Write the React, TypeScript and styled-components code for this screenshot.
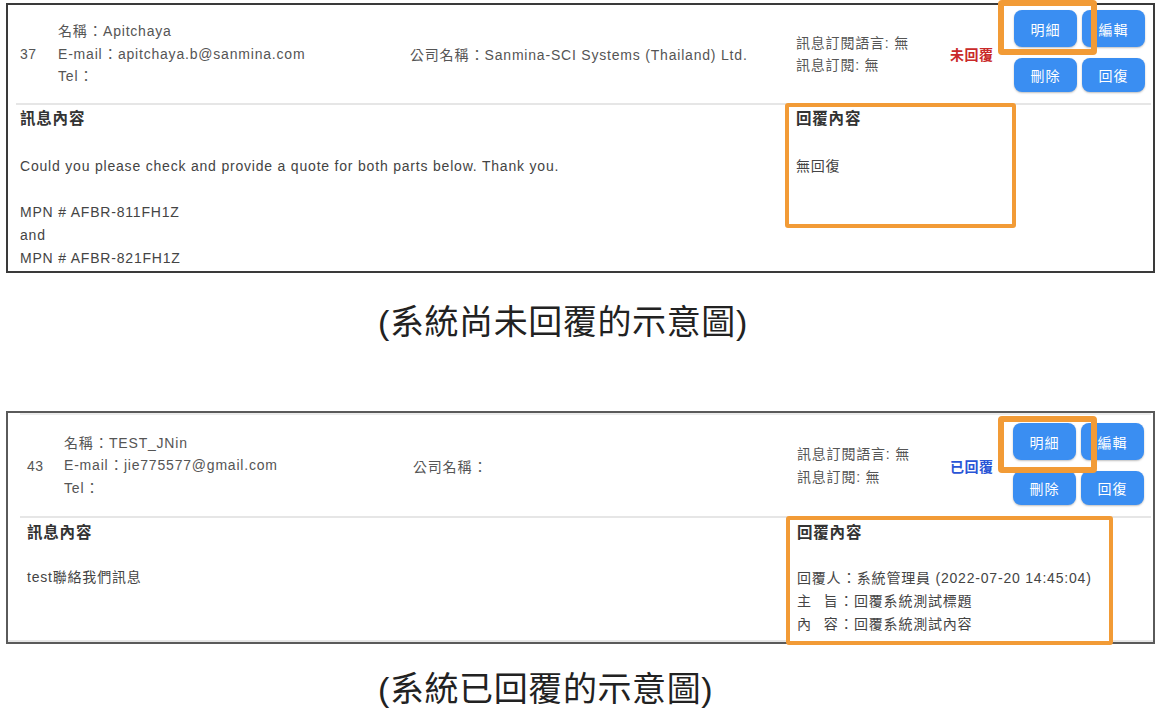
import * as React from "react"
import styled, { createGlobalStyle } from "styled-components"

const FONT = `"Liberation Sans", "Noto Sans CJK TC", sans-serif`

const GlobalStyle = createGlobalStyle`
  body {
    margin: 0;
    background: #fff;
    font-family: ${FONT};
  }
`

interface IMessage {
  id: number
  name: string
  email: string
  company: string
  replied: boolean
  body: string
  reply?: { by: string; subject: string; content: string }
}

interface ILayout {
  border: string
  headerCols: string
  lineInset: number
  headerPad: number
  headerHeight: number
  topLine: boolean
  actionsTop: number
  leftWidth: number
  leftPad: number
  replyWidth: number
  replyHeight: number
  headingTop: number
  headingGap: number
  markLeft: number
  markTop: number
  markHeight: number
}

const messages: IMessage[] = [
  {
    id: 37,
    name: "Apitchaya",
    email: "apitchaya.b@sanmina.com",
    company: "Sanmina-SCI Systems (Thailand) Ltd.",
    replied: false,
    body:
      "Could you please check and provide a quote for both parts below. Thank you.\n\nMPN # AFBR-811FH1Z\nand\nMPN # AFBR-821FH1Z",
  },
  {
    id: 43,
    name: "TEST_JNin",
    email: "jie775577@gmail.com",
    company: "",
    replied: true,
    body: "test聯絡我們訊息",
    reply: {
      by: "系統管理員 (2022-07-20 14:45:04)",
      subject: "回覆系統測試標題",
      content: "回覆系統測試內容",
    },
  },
]

const layouts: ILayout[] = [
  {
    border: "#3a3a3a",
    headerCols: "38px 352px 386px 154px 64px auto",
    lineInset: 8,
    headerPad: 4,
    headerHeight: 98,
    topLine: false,
    actionsTop: 5,
    leftWidth: 777,
    leftPad: 12,
    replyWidth: 231,
    replyHeight: 125,
    headingTop: 2,
    headingGap: 24,
    markLeft: -16,
    markTop: -10,
    markHeight: 55,
  },
  {
    border: "#5a5a5a",
    headerCols: "37px 349px 384px 153px 63px auto",
    lineInset: 12,
    headerPad: 7,
    headerHeight: 101,
    topLine: true,
    actionsTop: 8,
    leftWidth: 778,
    leftPad: 19,
    replyWidth: 327,
    replyHeight: 129,
    headingTop: 3,
    headingGap: 22,
    markLeft: -15,
    markTop: -7,
    markHeight: 57,
  },
]

const captions = ["(系統尚未回覆的示意圖)", "(系統已回覆的示意圖)"]

export default function App() {
  return (
    <Page lang="zh-TW">
      <GlobalStyle />
      {messages.map((m, i) => (
        <React.Fragment key={m.id}>
          <MessageCard message={m} layout={layouts[i]} />
          <Caption $first={i === 0}>{captions[i]}</Caption>
        </React.Fragment>
      ))}
    </Page>
  )
}

// full-width colon, centred in its em box like the traditional-chinese glyph
const C = () => <Colon>：</Colon>

function MessageCard({ message, layout }: { message: IMessage; layout: ILayout }) {
  return (
    <Frame $border={layout.border}>
      <Header
        $cols={layout.headerCols}
        $inset={layout.lineInset}
        $pad={layout.headerPad}
        $h={layout.headerHeight}
        $topLine={layout.topLine}
      >
        <Index>{message.id}</Index>
        <Contact>
          <div>
            名稱<C />
            {message.name}
          </div>
          <div>
            E-mail<C />
            {message.email}
          </div>
          <div>
            Tel<C />
          </div>
        </Contact>
        <div>
          公司名稱<C />
          {message.company}
        </div>
        <Contact>
          <div>訊息訂閱語言: 無</div>
          <div>訊息訂閱: 無</div>
        </Contact>
        <Status $replied={message.replied}>{message.replied ? "已回覆" : "未回覆"}</Status>
        <Actions $top={layout.actionsTop}>
          <Mark $left={layout.markLeft} $top={layout.markTop} $h={layout.markHeight} />
          <ActionButton $h={37}>明細</ActionButton>
          <ActionButton $h={37}>編輯</ActionButton>
          <ActionButton $h={34}>刪除</ActionButton>
          <ActionButton $h={34}>回復</ActionButton>
        </Actions>
      </Header>
      <Body $left={layout.leftWidth} $reply={layout.replyWidth} $bottomLine={layout.topLine}>
        <MessageCol $pad={layout.leftPad}>
          <Heading $top={layout.headingTop}>訊息內容</Heading>
          <Text $gap={layout.topLine ? 21 : layout.headingGap}>{message.body}</Text>
        </MessageCol>
        <ReplyBox $h={layout.replyHeight}>
          <Heading $top={layout.headingTop - 2}>回覆內容</Heading>
          {message.reply ? (
            <Text $gap={layout.headingGap}>
              <div>
                回覆人<C />
                {message.reply.by}
              </div>
              <div>
                主<Spacer />旨<C />
                {message.reply.subject}
              </div>
              <div>
                內<Spacer />容<C />
                {message.reply.content}
              </div>
            </Text>
          ) : (
            <Text $gap={layout.headingGap}>無回復</Text>
          )}
        </ReplyBox>
      </Body>
    </Frame>
  )
}

const Page = styled.div`
  display: flex;
  flex-direction: column;
  padding-top: 3px;
`

const Frame = styled.section<{ $border: string }>`
  margin-left: 6px;
  width: 1149px;
  box-sizing: border-box;
  border: 2px solid ${p => p.$border};
  background: #fff;
`

const Header = styled.div<{
  $cols: string
  $inset: number
  $pad: number
  $h: number
  $topLine: boolean
}>`
  display: grid;
  grid-template-columns: ${p => p.$cols};
  align-items: center;
  height: ${p => p.$h}px;
  margin-left: ${p => p.$inset}px;
  margin-right: 2px;
  padding-left: ${p => p.$pad}px;
  border-top: ${p => (p.$topLine ? "2px solid #ececec" : "none")};
  border-bottom: 2px solid #e6e6e6;
  color: #555;
  font-size: 14px;
  letter-spacing: 0.8px;
`

const Colon = styled.span`
  display: inline-block;
  width: 1.1em;
  text-align: center;
  letter-spacing: 0;
`

const Index = styled.div`
  letter-spacing: 0.5px;
`

const Contact = styled.div`
  line-height: 22.5px;
`

const Status = styled.div<{ $replied: boolean }>`
  font-weight: bold;
  letter-spacing: 0.5px;
  color: ${p => (p.$replied ? "#2a55d6" : "#c92a2a")};
`

const Actions = styled.div<{ $top: number }>`
  position: relative;
  align-self: start;
  margin-top: ${p => p.$top}px;
  display: grid;
  grid-template-columns: 63px 63px;
  column-gap: 5px;
  row-gap: 11px;
`

const ActionButton = styled.button<{ $h: number }>`
  height: ${p => p.$h}px;
  border: none;
  border-radius: 8px;
  background: #3a8ef2;
  color: #fff;
  font-family: ${FONT};
  font-size: 14px;
  letter-spacing: 1px;
  box-shadow: 0 1px 2px rgba(0, 0, 0, 0.25);
  padding: 0;
`

const Mark = styled.div<{ $left: number; $top: number; $h: number }>`
  position: absolute;
  left: ${p => p.$left}px;
  top: ${p => p.$top}px;
  width: 99px;
  height: ${p => p.$h}px;
  box-sizing: border-box;
  border: 6px solid #f29b36;
  border-radius: 4px;
  pointer-events: none;
`

const Body = styled.div<{ $left: number; $reply: number; $bottomLine: boolean }>`
  display: grid;
  grid-template-columns: ${p => p.$left}px ${p => p.$reply}px;
  align-items: start;
  height: ${p => (p.$bottomLine ? 122 : 166)}px;
  border-bottom: ${p => (p.$bottomLine ? "2px solid #e6e6e6" : "none")};
  color: #444;
  font-size: 14px;
  letter-spacing: 0.8px;
`

const MessageCol = styled.div<{ $pad: number }>`
  padding-left: ${p => p.$pad}px;
`

const ReplyBox = styled.div<{ $h: number }>`
  margin-top: -2px;
  height: ${p => p.$h}px;
  box-sizing: border-box;
  border: 4px solid #f29b36;
  border-radius: 3px;
  padding: 0 7px;
  background: #fff;
`

const Heading = styled.div<{ $top: number }>`
  margin-top: ${p => p.$top}px;
  line-height: 24px;
  font-size: 15.5px;
  font-weight: bold;
  color: #333;
`

const Text = styled.div<{ $gap: number }>`
  margin-top: ${p => p.$gap}px;
  line-height: 23px;
  white-space: pre-wrap;
  color: #444;
`

const Spacer = styled.span`
  display: inline-block;
  width: 12px;
`

const Caption = styled.p<{ $first: boolean }>`
  margin: 0 0 ${p => (p.$first ? 40 : 0)}px;
  padding-left: 378px;
  height: ${p => (p.$first ? 98 : 90)}px;
  line-height: ${p => (p.$first ? 98 : 90)}px;
  font-size: 34px;
  letter-spacing: 0.6px;
  color: #222;
`
